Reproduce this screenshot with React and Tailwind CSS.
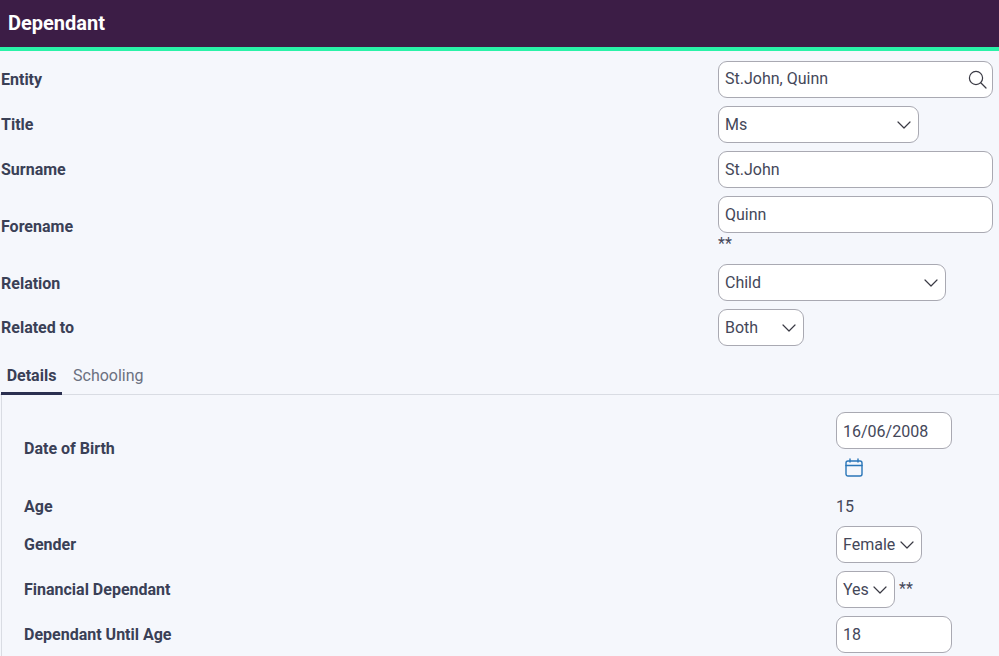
import React from "react";

const box = "h-[37px] bg-white border border-[#a9a9b2] rounded-[9px] px-[6px] flex items-center text-[16px] text-[#444759] shrink-0";

function Chevron({ className = "" }) {
  return (
    <svg width="14" height="8" viewBox="0 0 14 8" fill="none" stroke="#3a3a44" strokeWidth="1.2" strokeLinecap="round" strokeLinejoin="round" className={className}>
      <path d="M1 1l6 6 6-6" />
    </svg>
  );
}

function Select({ w, value, pad = "pr-[7px]" }) {
  return (
    <div className={`${box} ${w} ${pad} justify-between`}>
      <span>{value}</span>
      <Chevron />
    </div>
  );
}

function Row({ label, children, className = "", labelClass = "" }) {
  return (
    <div className={`flex items-center mb-2 ${className}`}>
      <div className={`w-[718px] pl-[1px] font-bold text-[16px] text-[#3a4056] shrink-0 ${labelClass}`}>{label}</div>
      <div>{children}</div>
    </div>
  );
}

function SubRow({ label, children, className = "", labelClass = "" }) {
  return (
    <div className={`flex items-center mb-2 ${className}`}>
      <div className={`w-[812px] font-bold text-[16px] text-[#3a4056] shrink-0 ${labelClass}`}>{label}</div>
      <div>{children}</div>
    </div>
  );
}

export default function App() {
  return (
    <div className="w-[999px] h-[656px] overflow-hidden bg-[#f5f7fc] font-['Roboto',sans-serif]">
      <div className="h-[51px] bg-[#3c1d46] border-b-4 border-[#2af2a8] pl-2 pb-[2px] flex items-center">
        <h1 className="text-[20px] font-bold text-white leading-none">Dependant</h1>
      </div>
      <div className="pt-[10px]">
        <Row label="Entity">
          <div className={`${box} w-[275px] justify-between pr-[5px]`}>
            <span className="pb-[2px]">St.John, Quinn</span>
            <svg width="19" height="19" viewBox="0 0 19 19" fill="none" stroke="#3a3a44" strokeWidth="1.2" strokeLinecap="round">
              <circle cx="8" cy="8" r="6.6" />
              <path d="M13 13l5 5" />
            </svg>
          </div>
        </Row>
        <Row label="Title"><Select w="w-[201px]" value="Ms" /></Row>
        <Row label="Surname"><div className={`${box} w-[275px]`}>St.John</div></Row>
        <Row label="Forename" labelClass="pt-[1px]">
          <div className={`${box} w-[275px]`}>Quinn</div>
          <div className="h-[23px] text-[16px] text-[#444759] leading-[22px]">**</div>
        </Row>
        <Row label="Relation" labelClass="pt-[2px]"><Select w="w-[228px]" value="Child" /></Row>
        <Row label="Related to"><Select w="w-[86px]" value="Both" /></Row>
      </div>
      <div className="flex mt-3 border-b border-[#d9dce3] h-[37px] text-[16px]">
        <div className="ml-[1px] w-[61px] text-center font-bold text-[#3a4056] border-b-[3px] border-[#2b3050] h-[37px] leading-[36px]">Details</div>
        <div className="ml-[11px] text-[#6b7080] leading-[36px]">Schooling</div>
      </div>
      <div className="ml-[1px] border-l border-[#d9dce3] pl-[22px] pt-[17px] h-[270px]">
        <SubRow label="Date of Birth" labelClass="pb-[1px]">
          <div className={`${box} w-[116px]`}><span className="pt-[2px]">16/06/2008</span></div>
          <div className="h-[38px] pl-[9px] pt-[9px]">
            <svg width="18" height="20" viewBox="0 0 18 20" fill="none" stroke="#2a76b8" strokeWidth="1.4" strokeLinecap="round">
              <rect x="1" y="3" width="16" height="15" rx="2" />
              <path d="M1 7.5h16M5 1v3M13 1v3" />
            </svg>
          </div>
        </SubRow>
        <SubRow label="Age" className="!mb-[7px]">
          <span className="text-[16px] text-[#444759]">15</span>
        </SubRow>
        <SubRow label="Gender"><Select w="w-[86px]" value="Female" /></SubRow>
        <SubRow label="Financial Dependant">
          <div className="flex items-center gap-[4px]">
            <Select w="w-[59px]" value="Yes" />
            <span className="text-[16px] text-[#444759] -mt-[2px]">**</span>
          </div>
        </SubRow>
        <SubRow label="Dependant Until Age"><div className={`${box} w-[116px]`}>18</div></SubRow>
      </div>
    </div>
  );
}
